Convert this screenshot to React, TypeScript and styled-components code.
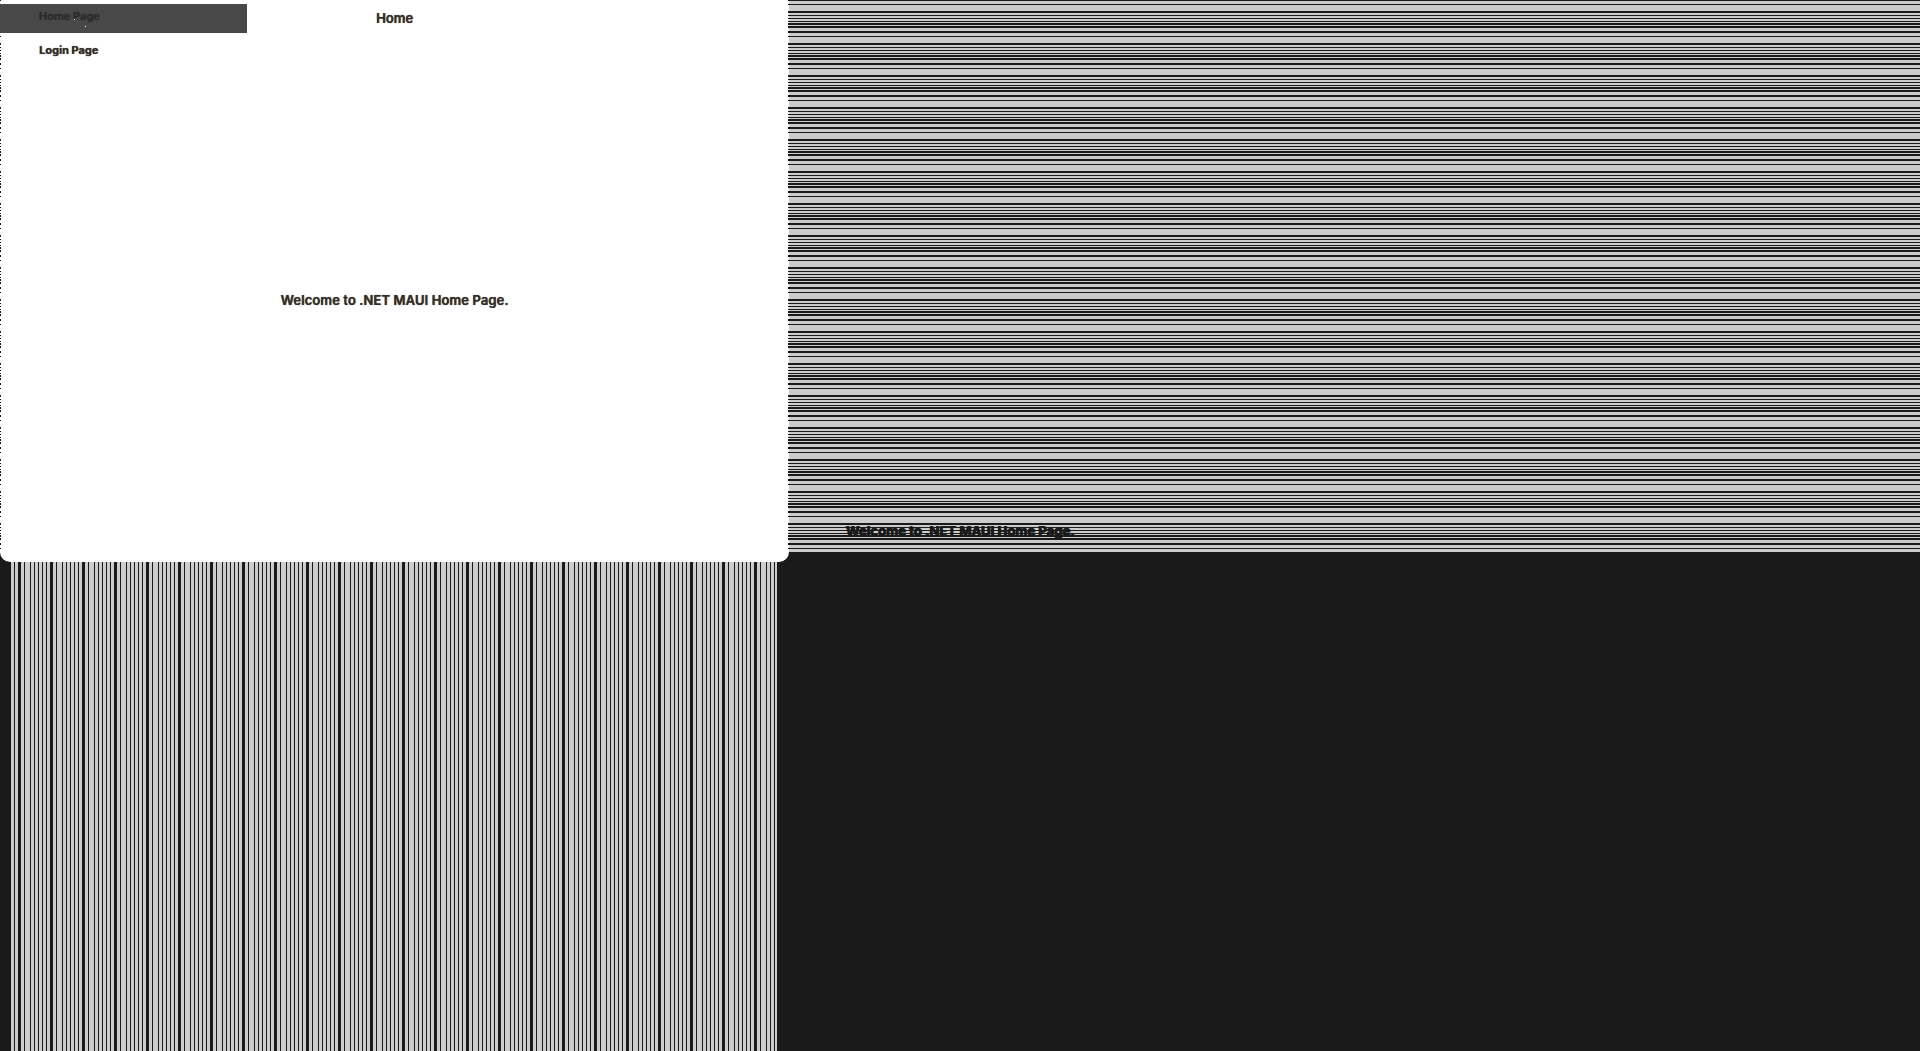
import React from "react";
import styled, { createGlobalStyle } from "styled-components";

const DARK = "#1a1a1a";
const LIGHT = "#cccccc";
const ROW_DARK = [0, 4, 11, 12, 15, 18, 21, 23, 24, 26, 27, 31];
const COL_DARK = [2, 6, 10, 14, 18, 19, 20, 24, 30];
const PERIOD = 32;

function stripes(direction: string, dark: number[], light: string): string {
  const stops: string[] = [];
  for (let i = 0; i < PERIOD; i++) {
    const c = dark.includes(i) ? DARK : light;
    stops.push(`${c} ${i}px`, `${c} ${i + 1}px`);
  }
  return `linear-gradient(${direction}, ${stops.join(", ")})`;
}

const rowStripes = stripes("to bottom", ROW_DARK, LIGHT);
const colStripes = stripes("to right", COL_DARK, LIGHT);
const edgeStripes = stripes("to bottom", ROW_DARK, "transparent");

const Global = createGlobalStyle`
  html, body { margin: 0; padding: 0; height: 100%; background: ${DARK}; overflow: hidden; }
  #root { height: 100%; }
`;

const Desktop = styled.div`
  display: grid;
  grid-template-columns: 789px 1fr;
  grid-template-rows: 562px 1fr;
  width: 1920px;
  height: 1051px;
  background: ${DARK};
  font-family: Inter, "Liberation Sans", sans-serif;
`;

const AppWindow = styled.div`
  position: relative;
  display: flex;
  flex-direction: column;
  background: #fff;
  color: #303030;
  border-radius: 0 0 10px 10px;
  overflow: hidden;

  &::before,
  &::after {
    content: "";
    position: absolute;
    top: 0;
    bottom: 12px;
    width: 1px;
    background-image: ${edgeStripes};
    background-size: 1px ${PERIOD}px;
  }
  &::before { left: 0; }
  &::after { right: 0; }
`;

const Flyout = styled.nav`
  position: absolute;
  top: 4px;
  left: 0;
  width: 247px;
  display: flex;
  flex-direction: column;
  z-index: 1;
`;

const FlyoutItem = styled.div<{ $active?: boolean }>`
  position: relative;
  box-sizing: border-box;
  height: ${(p) => (p.$active ? 29 : 34)}px;
  padding-left: 39px;
  padding-top: ${(p) => (p.$active ? 3 : 8)}px;
  font-size: 11px;
  line-height: 18px;
  font-weight: ${(p) => (p.$active ? 600 : 700)};
  background: ${(p) => (p.$active ? "#484848" : "transparent")};
  color: ${(p) => (p.$active ? "#2b2b2b" : "#303030")};
  text-shadow: ${(p) =>
    p.$active ? "0 0 0.8px #2b2b2b" : "0.4px 0 0.8px #303030"};
`;

const CursorDot = styled.i<{ $x: number; $y: number }>`
  position: absolute;
  left: ${(p) => p.$x}px;
  top: ${(p) => p.$y}px;
  width: 1px;
  height: 1px;
  background: #fff;
`;

const Title = styled.header`
  height: 36px;
  display: flex;
  align-items: center;
  justify-content: center;
  font-size: 13px;
  font-weight: 600;
  text-shadow: 0.4px 0 0.8px #303030;
`;

const Body = styled.main`
  flex: 1;
  display: flex;
  align-items: center;
  justify-content: center;
  padding-top: 2px;
`;

const Message = styled.p`
  margin: 0;
  font-size: 13px;
  font-weight: 600;
  letter-spacing: 0.1px;
  text-shadow: 0.4px 0 0.8px #303030;
`;

const TopPane = styled.section`
  align-self: start;
  height: 552px;
  box-sizing: border-box;
  display: flex;
  align-items: flex-end;
  padding: 0 0 10px 57px;
  background-image: ${rowStripes};
  background-size: 100% ${PERIOD}px;
`;

const GhostMessage = styled.p`
  margin: 0;
  font-size: 13px;
  line-height: 22px;
  font-weight: 700;
  letter-spacing: 0.08px;
  color: #1a1a1a;
  text-shadow: 0.7px 0 0 #1a1a1a, -0.4px 0 0 #1a1a1a;
`;

const BottomPane = styled.section`
  margin-left: 11px;
  width: 766px;
  background-image: ${colStripes};
  background-size: ${PERIOD}px 100%;
  background-position: -11px 0;
`;

export default function App() {
  return (
    <>
      <Global />
      <Desktop>
        <AppWindow>
          <Flyout>
            <FlyoutItem $active>
              Home Page
              <CursorDot $x={74} $y={15} />
              <CursorDot $x={85} $y={22} />
            </FlyoutItem>
            <FlyoutItem>Login Page</FlyoutItem>
          </Flyout>
          <Title>Home</Title>
          <Body>
            <Message>Welcome to .NET MAUI Home Page.</Message>
          </Body>
        </AppWindow>
        <TopPane>
          <GhostMessage>Welcome to .NET MAUI Home Page.</GhostMessage>
        </TopPane>
        <BottomPane />
      </Desktop>
    </>
  );
}
